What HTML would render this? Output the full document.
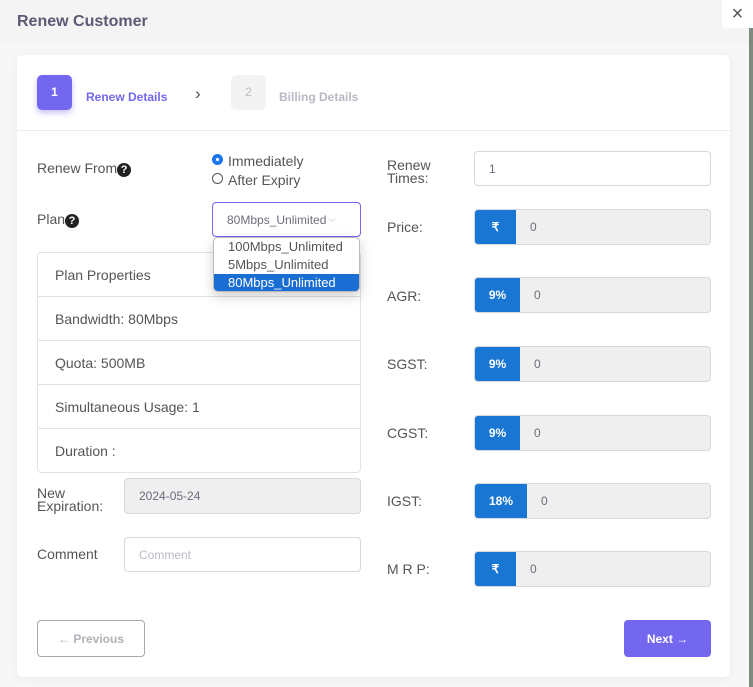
<!DOCTYPE html>
<html><head><style>
*{box-sizing:border-box;margin:0;padding:0}
body{width:753px;height:687px;overflow:hidden;background:#f7f7f7;font-family:"Liberation Sans",sans-serif;position:relative;color:#4b4b5a}
.a{position:absolute}
.lbl{position:absolute;font-size:14px;color:#555;line-height:13px}
.inp{position:absolute;border:1px solid #d8d6de;border-radius:4px;background:#fff;font-size:12px;color:#6e6b7b;padding-left:14px;display:flex;align-items:center}
.grp{position:absolute;left:474px;width:237px;height:36px;border:1px solid #d8d6de;border-radius:4px;background:#efefef;display:flex;overflow:hidden;font-size:12px;color:#6e6b7b}
.grp b{background:#1976d2;color:#fff;font-weight:bold;font-size:12px;display:flex;align-items:center;justify-content:center}
.grp span{display:flex;align-items:center;padding-left:14px}
.row{position:absolute;left:0;width:100%;height:44px;border-top:1px solid #e3e3e3;font-size:14px;color:#555;padding-left:17px;display:flex;align-items:center}
.q{display:inline-block;width:14px;height:14px;border-radius:50%;background:#222;color:#fff;font-size:11px;font-weight:bold;text-align:center;line-height:14px;vertical-align:0}
</style></head><body>
<div class="a" style="left:0;top:0;width:749px;height:44px;background:#f4f4f4"></div>
<div class="a" style="left:749px;top:0;width:4px;height:687px;background:#7c8a80"></div>
<div class="a" style="left:17px;top:13px;font-size:16px;font-weight:bold;color:#5e5873">Renew Customer</div>
<div class="a" style="left:722px;top:0;width:31px;height:28px;background:#fff;border-radius:0 0 0 4px;font-size:20px;color:#555;text-align:center;line-height:28px">×</div>
<div class="a" style="left:17px;top:55px;width:713px;height:622px;background:#fff;border-radius:6px;box-shadow:0 2px 10px rgba(0,0,0,.05)"></div>
<div class="a" style="left:37px;top:75px;width:35px;height:35px;background:#7367f0;border-radius:5px;color:#fff;font-size:12px;font-weight:bold;text-align:center;line-height:35px;box-shadow:0 3px 6px rgba(115,103,240,.4)">1</div>
<div class="a" style="left:86px;top:90px;font-size:12px;font-weight:bold;color:#7367f0">Renew Details</div>
<div class="a" style="left:195px;top:84px;font-size:17px;color:#555">›</div>
<div class="a" style="left:231px;top:75px;width:35px;height:35px;background:#f3f3f3;border-radius:5px;color:#bbb;font-size:12px;text-align:center;line-height:35px">2</div>
<div class="a" style="left:279px;top:90px;font-size:12px;font-weight:bold;color:#b9b9c3">Billing Details</div>
<div class="a" style="left:17px;top:130px;width:713px;height:1px;background:#ebe9f1"></div>

<div class="lbl" style="left:37px;top:162px">Renew From<span class="q">?</span></div>
<div class="a" style="left:212px;top:154px;width:11px;height:11px;border-radius:50%;border:3px solid #1a73e8;background:#fff;box-shadow:0 0 0 1px #1a73e8 inset"></div>
<div class="a" style="left:228px;top:153px;font-size:14px;color:#555">Immediately</div>
<div class="a" style="left:212px;top:173px;width:11px;height:11px;border-radius:50%;border:1px solid #555"></div>
<div class="a" style="left:228px;top:172px;font-size:14px;color:#555">After Expiry</div>
<div class="lbl" style="left:37px;top:213px">Plan<span class="q">?</span></div>
<div class="inp" style="left:212px;top:202px;width:149px;height:35px;border-color:#7367f0">80Mbps_Unlimited<span style="color:#aaa;font-size:9px;margin-left:2px">⌵</span></div>

<div class="a" style="left:37px;top:252px;width:324px;height:221px;border:1px solid #e3e3e3;border-radius:4px;overflow:hidden">
<div class="row" style="top:0;border-top:none">Plan Properties</div>
<div class="row" style="top:43px">Bandwidth: 80Mbps</div>
<div class="row" style="top:87px">Quota: 500MB</div>
<div class="row" style="top:131px">Simultaneous Usage: 1</div>
<div class="row" style="top:175px">Duration :</div>
</div>
<div class="a" style="left:213px;top:237px;width:147px;height:55px;background:#fff;border:1px solid #bbb;border-radius:5px;box-shadow:0 4px 12px rgba(0,0,0,.2);overflow:hidden;font-size:13px;color:#555;line-height:18px">
<div style="padding-left:14px">100Mbps_Unlimited</div>
<div style="padding-left:14px">5Mbps_Unlimited</div>
<div style="padding-left:14px;background:#1a6dd3;color:#fff">80Mbps_Unlimited</div>
</div>

<div class="lbl" style="left:37px;top:487px">New<br>Expiration:</div>
<div class="inp" style="left:124px;top:478px;width:237px;height:36px;background:#efefef">2024-05-24</div>
<div class="lbl" style="left:37px;top:548px">Comment</div>
<div class="inp" style="left:124px;top:537px;width:237px;height:35px;color:#b9b9c3">Comment</div>

<div class="lbl" style="left:387px;top:159px">Renew<br>Times:</div>
<div class="inp" style="left:474px;top:151px;width:237px;height:35px">1</div>
<div class="lbl" style="left:387px;top:221px">Price:</div>
<div class="grp" style="top:209px"><b style="width:41px">₹</b><span>0</span></div>
<div class="lbl" style="left:387px;top:290px">AGR:</div>
<div class="grp" style="top:277px"><b style="width:45px">9%</b><span>0</span></div>
<div class="lbl" style="left:387px;top:358px">SGST:</div>
<div class="grp" style="top:346px"><b style="width:45px">9%</b><span>0</span></div>
<div class="lbl" style="left:387px;top:427px">CGST:</div>
<div class="grp" style="top:415px"><b style="width:45px">9%</b><span>0</span></div>
<div class="lbl" style="left:387px;top:495px">IGST:</div>
<div class="grp" style="top:483px"><b style="width:52px">18%</b><span>0</span></div>
<div class="lbl" style="left:387px;top:563px">M R P:</div>
<div class="grp" style="top:551px"><b style="width:41px">₹</b><span>0</span></div>

<div class="a" style="left:37px;top:620px;width:108px;height:37px;border:1px solid #aaa;border-radius:4px;color:#b0b0b8;font-size:12px;font-weight:bold;text-align:center;line-height:37px">← Previous</div>
<div class="a" style="left:624px;top:620px;width:87px;height:37px;background:#7367f0;border-radius:4px;color:#fff;font-size:12px;font-weight:bold;text-align:center;line-height:39px">Next →</div>
</body></html>
